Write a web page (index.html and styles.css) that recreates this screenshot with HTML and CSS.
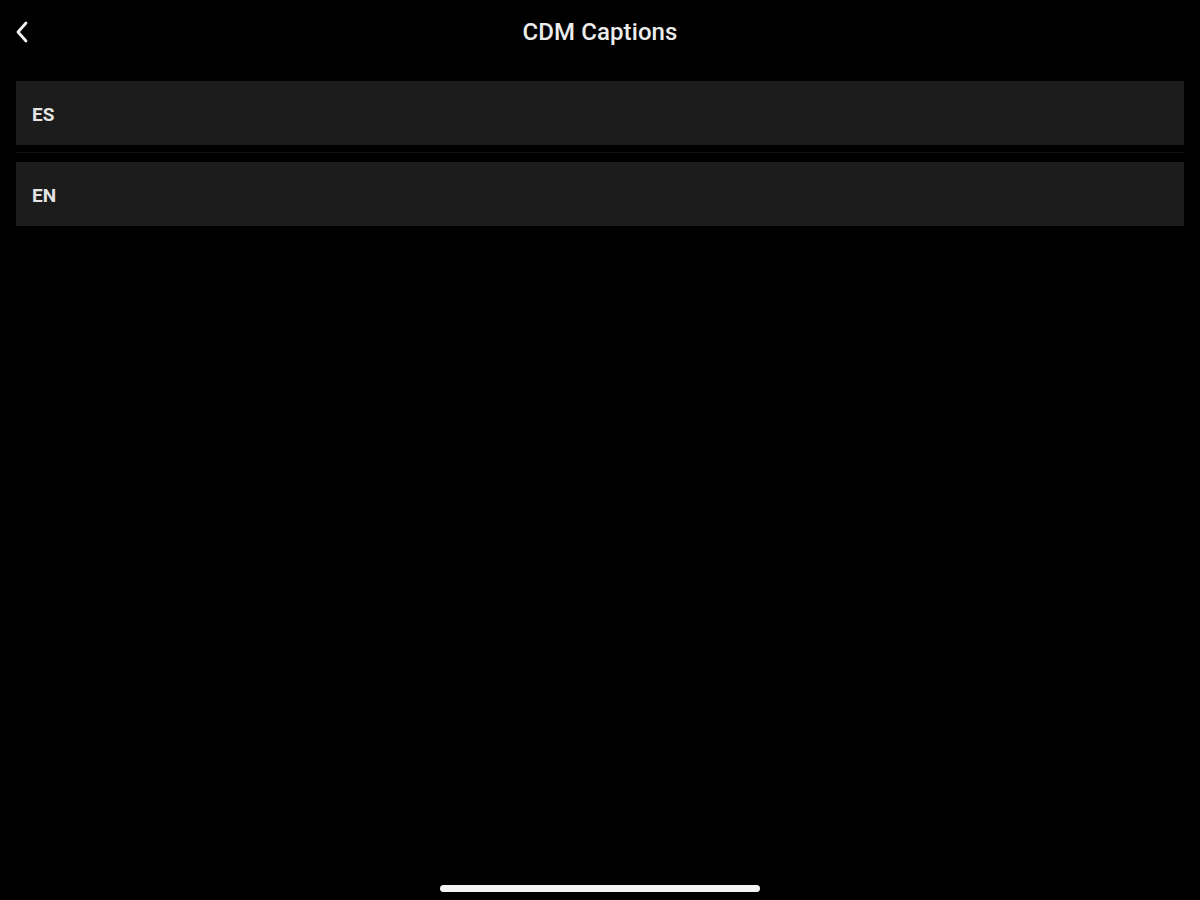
FILE: index.html
```html
<!DOCTYPE html>
<html lang="en">
<head>
	<meta charset="utf-8">
	<title>CDM Captions</title>
	<link rel="stylesheet" href="styles.css">
</head>
<body>
	<div class="screen">
		<header class="nav-bar">
			<button type="button" class="back-button" aria-label="Back">
				<svg width="14" height="24" viewBox="0 0 14 24">
					<path d="M11 3L3 12l8 9" fill="none" stroke="#f2f2f2" stroke-width="2.8" stroke-linecap="round" stroke-linejoin="round"></path>
				</svg>
			</button>
			<h1 class="nav-title">CDM Captions</h1>
		</header>
		<ul class="caption-list">
			<li class="caption-item">ES</li>
			<li class="caption-divider"></li>
			<li class="caption-item">EN</li>
		</ul>
		<div class="home-indicator"></div>
	</div>
</body>
</html>
```

FILE: styles.css
```css
html, body {
	margin: 0;
	padding: 0;
	background: #000;
}
.screen {
	width: 1200px;
	height: 900px;
	display: flex;
	flex-direction: column;
	font-family: Roboto, "Noto Sans", Arial, sans-serif;
	color: #ececec;
	-webkit-font-smoothing: antialiased;
}
.nav-bar {
	position: relative;
	height: 64px;
	display: flex;
	align-items: center;
	justify-content: center;
}
.back-button {
	position: absolute;
	left: 14px;
	top: 20px;
	background: none;
	border: 0;
	padding: 0;
	width: 16px;
	height: 24px;
	-webkit-appearance: none;
	appearance: none;
}
.nav-title {
	margin: 0;
	font-size: 24px;
	font-weight: 500;
	letter-spacing: 0.1px;
	color: #ececec;
}
.caption-list {
	list-style: none;
	margin: 17px 16px 0;
	padding: 0;
	display: flex;
	flex-direction: column;
}
.caption-item {
	height: 64px;
	display: flex;
	align-items: center;
	padding: 2px 0 0 16px;
	box-sizing: border-box;
	background: #1c1c1c;
	font-size: 19px;
	font-weight: 700;
	color: #e4e4e4;
}
.caption-divider {
	height: 1px;
	margin: 7px 0 9px;
	background: #141414;
}
.home-indicator {
	margin: auto auto 8px;
	width: 320px;
	height: 7px;
	border-radius: 4px;
	background: #f4f4f4;
}
```
